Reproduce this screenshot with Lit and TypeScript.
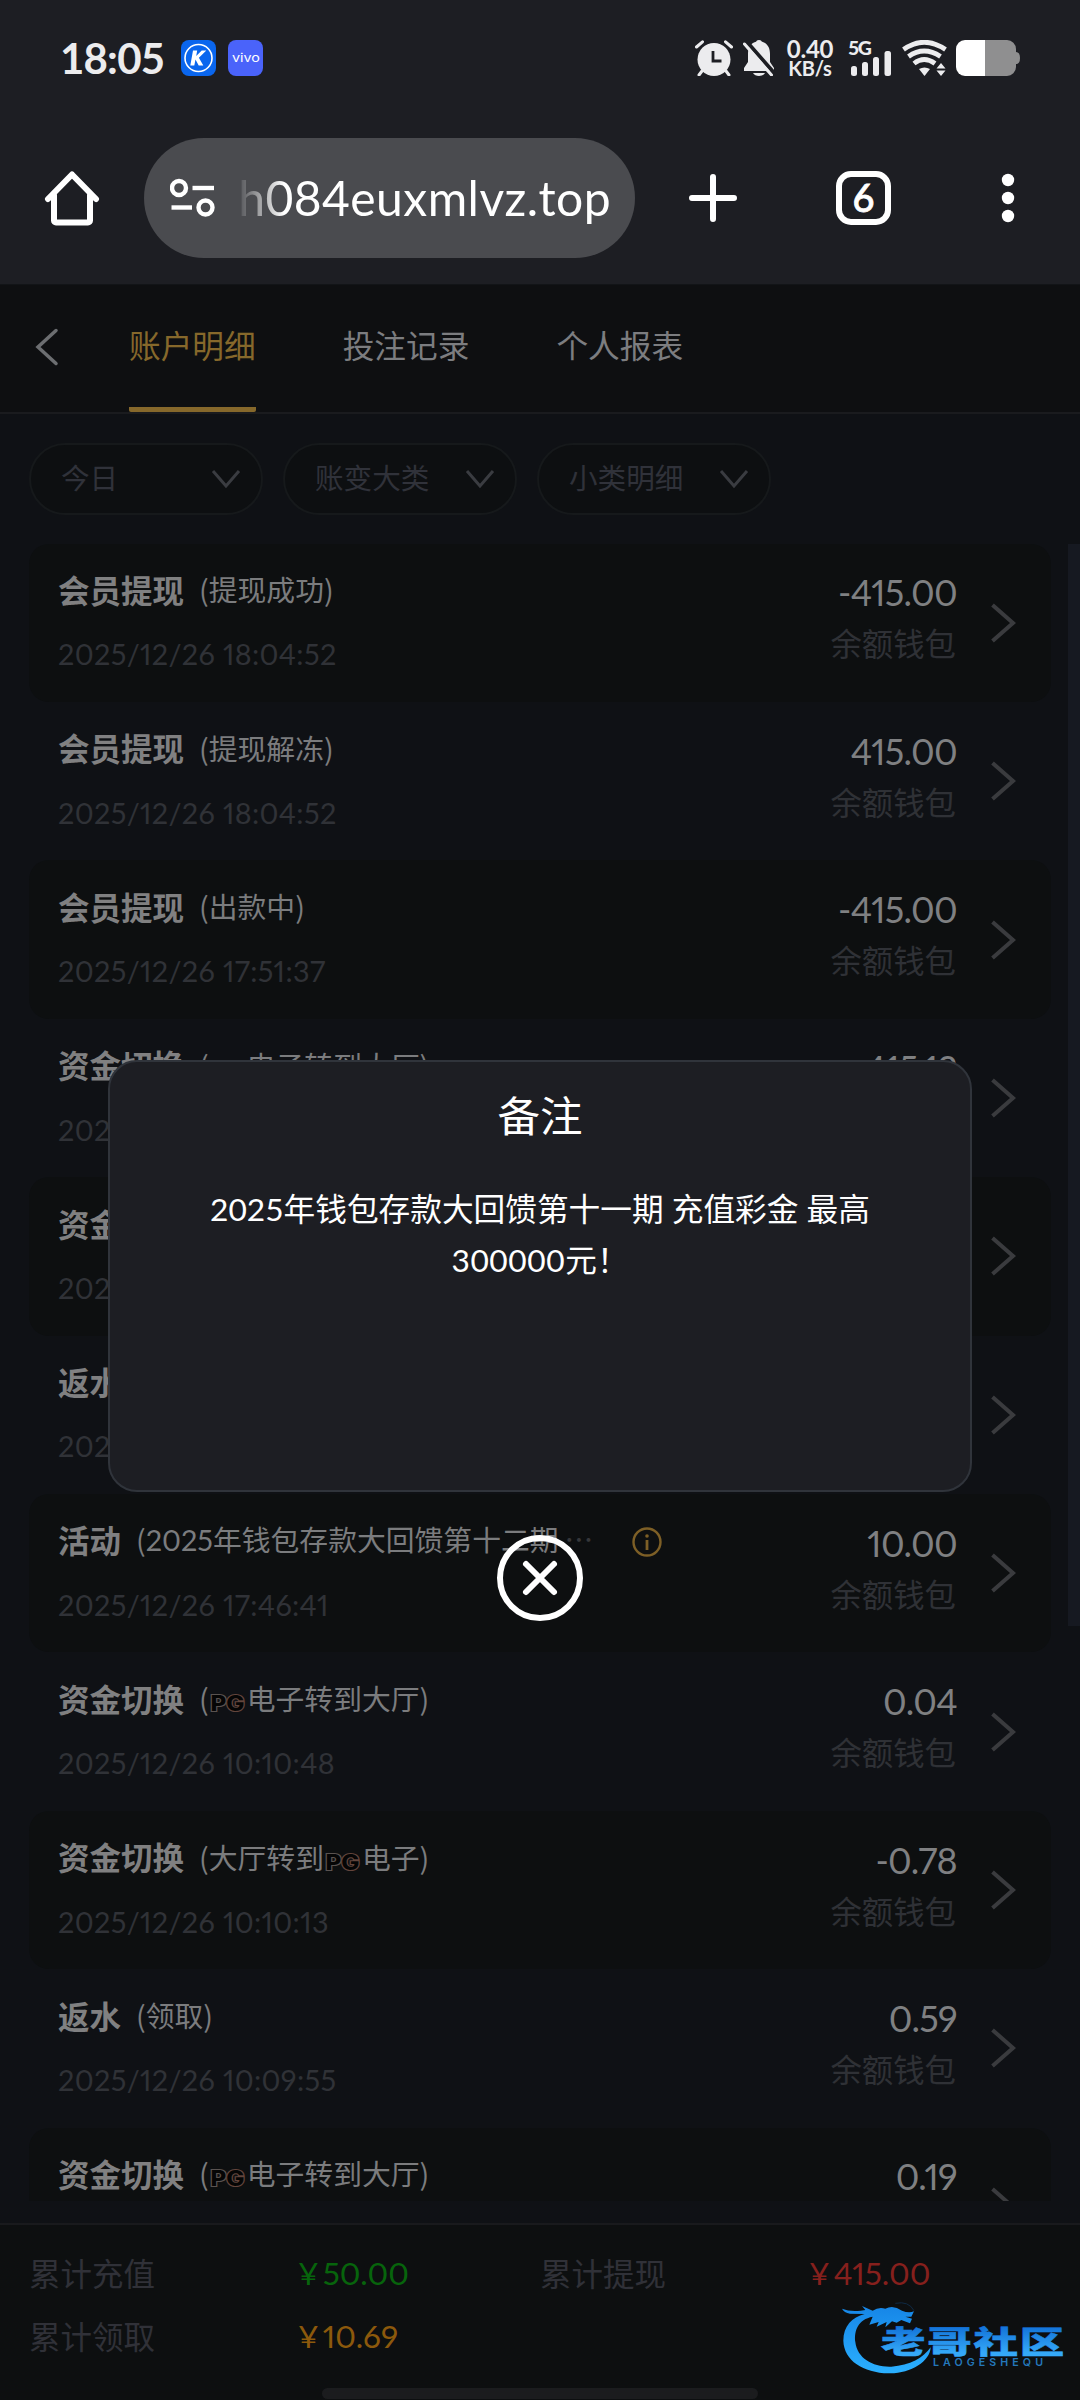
import { LitElement, html, css, svg, nothing } from "lit";
import { customElement, property } from "lit/decorators.js";

const CJK = css`"Noto Sans CJK SC", sans-serif`;

interface Entry {
  title: string;
  note: unknown;
  time: string;
  amount: string;
  info?: boolean;
}

const pg = html`<svg class="pg" width="38" height="22" viewBox="0 0 38 22">
  <text x="1.500" y="19" font-family="Inter, sans-serif" font-weight="800" font-size="21" textLength="34"
    lengthAdjust="spacingAndGlyphs" fill="#050505" stroke="#5a5350" stroke-width="2.200"
    paint-order="stroke">P<tspan stroke="#63453c">G</tspan></text>
</svg>`;

const entries: Entry[] = [
  { title: "会员提现", note: "(提现成功)", time: "2025/12/26 18:04:52", amount: "-415.00" },
  { title: "会员提现", note: "(提现解冻)", time: "2025/12/26 18:04:52", amount: "415.00" },
  { title: "会员提现", note: "(出款中)", time: "2025/12/26 17:51:37", amount: "-415.00" },
  { title: "资金切换", note: html`(${pg}电子转到大厅)`, time: "2025/12/26 17:51:19", amount: "415.12" },
  { title: "资金切换", note: html`(大厅转到${pg}电子)`, time: "2025/12/26 17:47:02", amount: "-10.00" },
  { title: "返水", note: "(领取)", time: "2025/12/26 17:46:48", amount: "0.06" },
  {
    title: "活动",
    note: html`(<span class="digits">2025</span>年钱包存款大回馈第十二期<span class="more">…</span>`,
    time: "2025/12/26 17:46:41",
    amount: "10.00",
    info: true,
  },
  { title: "资金切换", note: html`(${pg}电子转到大厅)`, time: "2025/12/26 10:10:48", amount: "0.04" },
  { title: "资金切换", note: html`(大厅转到${pg}电子)`, time: "2025/12/26 10:10:13", amount: "-0.78" },
  { title: "返水", note: "(领取)", time: "2025/12/26 10:09:55", amount: "0.59" },
  { title: "资金切换", note: html`(${pg}电子转到大厅)`, time: "2025/12/26 10:09:31", amount: "0.19" },
];

@customElement("status-bar")
class StatusBar extends LitElement {
  static styles = css`
    :host {
      display: flex;
      justify-content: space-between;
      height: 36px;
      padding: 40px 60px 0 60px;
      font-family: Lato, sans-serif;
      color: #ececee;
    }
    .side { display: flex; align-items: center; height: 36px; }
    .time { font-size: 42px; font-weight: 700; line-height: 50px; width: 121px; letter-spacing: -0.8px; }
    .apps { display: flex; gap: 12px; }
    svg { display: block; }
    .alarm { margin-right: 10px; }
    .bell { margin-right: 11px; }
    .speed { width: 48px; margin-right: 14px; text-align: center; font-weight: 700; }
    .rate { font-size: 24px; line-height: 19px; letter-spacing: -0.2px; }
    .unit { font-size: 20px; line-height: 20px; letter-spacing: -0.2px; }
    .signal { margin-right: 10px; }
    .wifi { margin-right: 9px; }
  `;
  render() {
    return html`
      <div class="side">
        <div class="time">18:05</div>
        <div class="apps">
          <svg width="35" height="36" viewBox="0 0 35 36">
            <rect width="35" height="36" rx="8" fill="#0a66ee" />
            <circle cx="17.5" cy="18" r="13.500" fill="none" stroke="#fff" stroke-width="1.600" />
            <path d="M13.500 11h4.200l-1 5.500 5.500-5.500h4.600l-7.400 7.200 4.400 7.800h-4.600l-3.200-6-1.200 6h-4z" transform="translate(-1.500 -.5)" fill="#fff" />
          </svg>
          <svg width="35" height="36" viewBox="0 0 35 36">
            <rect width="35" height="36" rx="8" fill="#4a63fa" />
            <text x="4" y="22" font-family="Inter, sans-serif" font-size="11" fill="#fff" textLength="28" lengthAdjust="spacingAndGlyphs">vivo</text>
          </svg>
        </div>
      </div>
      <div class="side">
        <svg class="alarm" width="38" height="36" viewBox="0 0 38 36" fill="none" stroke="#ececee" stroke-linecap="round">
          <circle cx="19" cy="19.500" r="16.500" fill="#ececee" stroke="none" />
          <path d="M1.500 7 7.500 1.800M36.500 7 30.500 1.800M7 31l-3 4M31 31l3 4" stroke-width="3" />
          <path d="M18 11v10h8.500" stroke="#1d1e23" stroke-width="2.800" stroke-linecap="butt" />
        </svg>
        <svg class="bell" width="32" height="36" viewBox="0 0 32 36">
          <path d="M16 0c-1.800 0-2.500 1-3 1.800C7 3.500 5 8.500 5 14v8l-4 6v3h30v-3l-4-6v-8c0-5.500-2-10.500-8-12.200C18.500 1 17.800 0 16 0z" fill="#ececee" />
          <path d="M10 33h12c-2 4-10 4-12 0z" fill="#ececee" />
          <path d="M3 1 31 33" stroke="#1d1e23" stroke-width="4" />
          <path d="M1.500 4 28.500 35" stroke="#ececee" stroke-width="3" stroke-linecap="round" />
        </svg>
        <div class="speed"><div class="rate">0.40</div><div class="unit">KB/s</div></div>
        <svg class="signal" width="44" height="36" viewBox="0 0 44 36" fill="#ececee">
          <text x="0" y="15" font-family="Lato, sans-serif" font-weight="900" font-size="19.500" textLength="24">5G</text>
          <rect x="3" y="26" width="6" height="10" rx="2.500" />
          <rect x="14" y="22" width="6" height="14" rx="2.500" />
          <rect x="25" y="17" width="6" height="19" rx="2.500" />
          <rect x="36.500" y="11" width="6.500" height="25" rx="2.500" />
        </svg>
        <svg class="wifi" width="45" height="36" viewBox="0 0 45 36" fill="none" stroke="#ececee" stroke-width="4.800">
          <path d="M1.500 9.500Q22 -5 43.500 9.500" />
          <path d="M6.500 16.500Q22 5.500 38.500 16.500" />
          <path d="M12 23.500Q22 15.500 33 23.500" />
          <path d="M17 29q5.500-3 11 0l-5.500 7z" fill="#ececee" stroke="none" />
          <path d="M34.500 28.500 39 23l4.500 5.500zM34.500 30.500 39 36l4.500-5.500z" fill="#ececee" stroke="none" />
        </svg>
        <svg width="64" height="36" viewBox="0 0 64 36">
          <path d="M9 0h42a9 9 0 0 1 9 9v3q4 0 4 6t-4 6v3a9 9 0 0 1-9 9H9z" fill="#8f8f90" />
          <path d="M9 0h20v36H9a9 9 0 0 1-9-9V9a9 9 0 0 1 9-9z" fill="#fff" />
        </svg>
      </div>
    `;
  }
}

@customElement("browser-bar")
class BrowserBar extends LitElement {
  static styles = css`
    :host {
      display: flex;
      align-items: center;
      height: 120px;
      padding: 62px 65px 26px 44px;
      color: #fff;
    }
    svg { display: block; flex: none; }
    .address {
      display: flex;
      align-items: center;
      box-sizing: border-box;
      width: 492px;
      height: 120px;
      margin: 0 53px 0 44px;
      padding: 0 24px 0 26px;
      border-radius: 60px;
      background: #4a4b4f;
    }
    .host {
      flex: 1;
      margin-left: 20px;
      overflow: hidden;
      text-align: right;
      white-space: nowrap;
      font: 48px/70px Lato, sans-serif;
      letter-spacing: 0.45px;
      -webkit-mask-image: linear-gradient(90deg, transparent, #000 48px);
      mask-image: linear-gradient(90deg, transparent, #000 48px);
    }
    .tabs {
      box-sizing: border-box;
      width: 55px;
      height: 54px;
      margin: 0 110px 0 98px;
      border: 6px solid #fff;
      border-radius: 15px;
      text-align: center;
      font: 500 38px/41px Lato, sans-serif;
      -webkit-text-stroke: 0.8px #fff;
    }
  `;
  render() {
    return html`
      <svg width="56" height="56" viewBox="0 0 56 56" fill="none" stroke="#fff" stroke-width="6" stroke-linejoin="round" stroke-linecap="round">
        <path d="M4 29 28 4.500 52 29M10 25v25.500a2 2 0 0 0 2 2h32a2 2 0 0 0 2-2V25" />
      </svg>
      <div class="address">
        <svg width="46" height="40" viewBox="0 0 46 40" fill="none" stroke="#fff" stroke-width="4.400">
          <circle cx="9" cy="10" r="7" /><path d="M22.500 10H44" />
          <circle cx="35.500" cy="29.500" r="7" /><path d="M1.500 29.500H22" />
        </svg>
        <div class="host">h084euxmlvz.top</div>
      </div>
      <svg width="50" height="50" viewBox="0 0 50 50" stroke="#fff" stroke-width="6" stroke-linecap="round">
        <path d="M25 4v42M4 25h42" />
      </svg>
      <div class="tabs">6</div>
      <svg width="14" height="50" viewBox="0 0 14 50" fill="#fff">
        <circle cx="7" cy="7" r="6.200" /><circle cx="7" cy="25" r="6.200" /><circle cx="7" cy="43" r="6.200" />
      </svg>
    `;
  }
}

@customElement("entry-row")
class EntryRow extends LitElement {
  @property({ attribute: false }) entry!: Entry;
  static styles = css`
    :host {
      display: flex;
      box-sizing: border-box;
      height: 158.4px;
      padding: 0 35px 0 29px;
      border-radius: 20px;
      font-family: ${CJK};
      white-space: nowrap;
    }
    :host(.shaded) { background: #0d0f10; }
    .left { flex: 1; padding-top: 22.4px; }
    .head { display: flex; align-items: center; height: 46px; }
    .title { font-size: 31.5px; font-weight: 700; line-height: 46px; color: #808081; }
    .note { margin-left: 15px; padding-top: 1px; font-size: 28.8px; line-height: 46px; color: #7b7c7e; }
    .digits, .time, .amount { font-family: Lato, "Noto Sans CJK SC", sans-serif; font-variant-numeric: proportional-nums; }
    .more { margin-left: 6px; color: #36373a; }
    .pg { display: inline-block; vertical-align: -4px; }
    .info { margin: 6px 0 0 39px; }
    .time { margin-top: 22.5px; font-size: 28.8px; line-height: 40px; letter-spacing: 0.36px; color: #303237; }
    .right { padding-top: 28.8px; text-align: right; }
    .amount { margin-right: -1px; font-size: 36px; line-height: 40px; letter-spacing: -0.7px; color: #7f8082; }
    .wallet { margin-top: 11px; font-size: 31.4px; line-height: 40px; color: #2f3136; }
    .arrow { align-self: center; margin-left: 34px; }
    svg { display: block; }
  `;
  render() {
    const e = this.entry;
    return html`
      <div class="left">
        <div class="head">
          <span class="title">${e.title}</span><span class="note">${e.note}</span>
          ${e.info
            ? html`<svg class="info" width="30" height="30" viewBox="0 0 30 30" fill="none" stroke="#7d5f26" stroke-width="2.400">
                <circle cx="15" cy="15" r="13.500" /><path d="M15 13v10" stroke-width="2.800" /><circle cx="15" cy="9" r="1.800" fill="#7d5f26" stroke="none" />
              </svg>`
            : nothing}
        </div>
        <div class="time">${e.time}</div>
      </div>
      <div class="right">
        <div class="amount">${e.amount}</div>
        <div class="wallet">余额钱包</div>
      </div>
      <svg class="arrow" width="26" height="40" viewBox="0 0 26 40" fill="none" stroke="#3a3b3e" stroke-width="4">
        <path d="M2.500 2 23 20 2.500 38" />
      </svg>
    `;
  }
}

@customElement("remark-dialog")
class RemarkDialog extends LitElement {
  static styles = css`
    :host { display: flex; flex-direction: column; align-items: center; font-family: ${CJK}; color: #fff; }
    .panel {
      box-sizing: border-box;
      width: 864px;
      height: 432px;
      border: 2px solid #30343b;
      border-radius: 29px;
      background: #1d1e23;
      text-align: center;
    }
    .heading { margin-top: 22px; font-size: 42.5px; font-weight: 400; line-height: 60px; }
    .text {
      width: 700px;
      margin: 40px auto 0;
      font-size: 31.68px;
      line-height: 51px;
      font-family: Lato, "Noto Sans CJK SC", sans-serif;
    }
    .wide { letter-spacing: 0.6px; }
    .close { display: block; margin-top: 42px; }
  `;
  render() {
    return html`
      <div class="panel">
        <div class="heading">备注</div>
        <div class="text">2025年钱包存款大回馈第十一期 充值彩金 最高<br /><span class="wide">300000</span>元！</div>
      </div>
      <svg class="close" width="88" height="88" viewBox="0 0 88 88" fill="none" stroke="#fff" stroke-width="6">
        <circle cx="44" cy="44" r="40" />
        <path d="M30 30l28 28M58 30 30 58" stroke-linecap="round" />
      </svg>
    `;
  }
}

const logo = svg`
  <defs>
    <linearGradient id="sky" x1="0" y1="40" x2="0" y2="250" gradientUnits="userSpaceOnUse">
      <stop offset="0" stop-color="#1584e6" /><stop offset="1" stop-color="#2bb0ff" />
    </linearGradient>
    <linearGradient id="ink" x1="0" y1="0" x2="0" y2="1">
      <stop offset="0.2" stop-color="#1272d8" /><stop offset="0.8" stop-color="#35a9f8" />
    </linearGradient>
  </defs>
  <path fill="url(#sky)" d="M128 80C84 88 72 122 76 156C82 206 130 232 184 230C240 226 280 204 302 172C300 216 240 252 176 250C100 248 42 212 40 152C40 108 66 82 104 72L60 71Q42 68 36 56Q60 66 92 62L106 60L96 48L128 62Q146 50 166 56Q190 44 216 62Q236 70 252 64L244 80L226 80L246 86L240 100L214 90L200 98L186 94L166 112L170 96L140 110L146 96L118 104Z" />
  <path d="M196 40Q236 32 252 62" fill="none" stroke="#0f2a44" stroke-width="3" />
  <text transform="translate(153 189) scale(1.450 1)" font-family="Noto Sans CJK SC, sans-serif" font-weight="900" font-size="92"
    textLength="379" lengthAdjust="spacing" fill="url(#ink)" stroke="url(#ink)" stroke-width="1.500">老哥社区</text>
  <text x="309" y="228" font-family="Inter, sans-serif" font-weight="600" font-size="32" textLength="330" fill="#2478bb">LAOGESHEQU</text>
`;

@customElement("app-root")
class AppRoot extends LitElement {
  static styles = css`
    :host {
      display: flex;
      flex-direction: column;
      position: relative;
      width: 1080px;
      height: 2400px;
      overflow: hidden;
      background: #0f1115;
      font-family: ${CJK};
    }
    .chrome { height: 284px; flex: none; background: #1d1e23; }
    .nav {
      display: flex;
      box-sizing: border-box;
      height: 129.6px;
      flex: none;
      padding-left: 34px;
      border-top: 1px solid #121417;
      border-bottom: 2px solid #1a1b1e;
      background: #0e0f11;
    }
    .back { display: block; margin: 43px 70px 0 0; }
    .tab {
      display: flex;
      box-sizing: border-box;
      height: 126.6px;
      margin-right: 87px;
      border-bottom: 5px solid transparent;
      border-radius: 2px;
      font-size: 31.68px;
      line-height: 118px;
      color: #7c7d80;
    }
    .tab.active { color: #86682b; border-bottom-color: #86682b; }
    .filters { display: flex; flex: none; gap: 20px; padding: 29px 29px; }
    .filter {
      display: flex;
      align-items: center;
      justify-content: space-between;
      box-sizing: border-box;
      width: 234px;
      height: 72px;
      padding: 0 20px 0 30px;
      border: 2px solid #16191b;
      border-radius: 36px;
      background: #0d0f11;
      color: #30323a;
      font-size: 28.6px;
      line-height: 66px;
    }
    .filter span { margin-top: -3px; }
    .list { height: 1657px; flex: none; margin: 0 29px; overflow: hidden; }
    .thumb { position: absolute; right: 0; top: 544px; width: 12px; height: 1082px; background: #161921; }
    .summary {
      display: grid;
      grid-template-columns: 270px 241px 270px auto;
      grid-auto-rows: 63px;
      flex: 1;
      align-content: start;
      box-sizing: border-box;
      margin-top: 22px;
      padding: 16px 29px 0;
      border-top: 2px solid #191a1d;
      background: #0d0f10;
      font-size: 31.5px;
      line-height: 63px;
      color: #303138;
    }
    .label { white-space: nowrap; }
    .money {
      display: flex;
      gap: 4px;
      margin: 1px 0 0 -1px;
      font-family: Lato, sans-serif;
      font-variant-numeric: proportional-nums;
    }
    .in { color: #07640c; }
    .out { color: #86201d; }
    .got { color: #8c590c; }
    .handle { position: absolute; left: 322px; bottom: 1px; width: 436px; height: 11px; border-radius: 6px; background: #1b1c1e; }
    .dialog { position: absolute; left: 108px; top: 1060px; width: 864px; }
    .logo { position: absolute; right: 0; bottom: 0; }
  `;
  render() {
    const chevron = html`<svg width="30" height="20" viewBox="0 0 30 20" fill="none" stroke="#3a3c41" stroke-width="3">
      <path d="M2 2 15 17 28 2" />
    </svg>`;
    return html`
      <div class="chrome"><status-bar></status-bar><browser-bar></browser-bar></div>
      <div class="nav">
        <svg class="back" width="25" height="38" viewBox="0 0 25 38" fill="none" stroke="#6c6e71" stroke-width="3.500" stroke-linecap="round">
          <path d="M22 2.500 4 19 22 35.500" />
        </svg>
        <div class="tab active">账户明细</div>
        <div class="tab">投注记录</div>
        <div class="tab">个人报表</div>
      </div>
      <div class="filters">
        ${["今日", "账变大类", "小类明细"].map((f) => html`<div class="filter"><span>${f}</span>${chevron}</div>`)}
      </div>
      <div class="list">
        ${entries.map((e, i) => html`<entry-row class=${i % 2 ? "" : "shaded"} .entry=${e}></entry-row>`)}
      </div>
      <div class="summary">
        <div class="label">累计充值</div><div class="money in"><span>¥</span><span>50.00</span></div>
        <div class="label">累计提现</div><div class="money out"><span>¥</span><span>415.00</span></div>
        <div class="label">累计领取</div><div class="money got"><span>¥</span><span>10.69</span></div>
      </div>
      <div class="thumb"></div>
      <div class="handle"></div>
      <remark-dialog class="dialog"></remark-dialog>
      <svg class="logo" width="250" height="110" viewBox="0 0 750 330">${logo}</svg>
    `;
  }
}
